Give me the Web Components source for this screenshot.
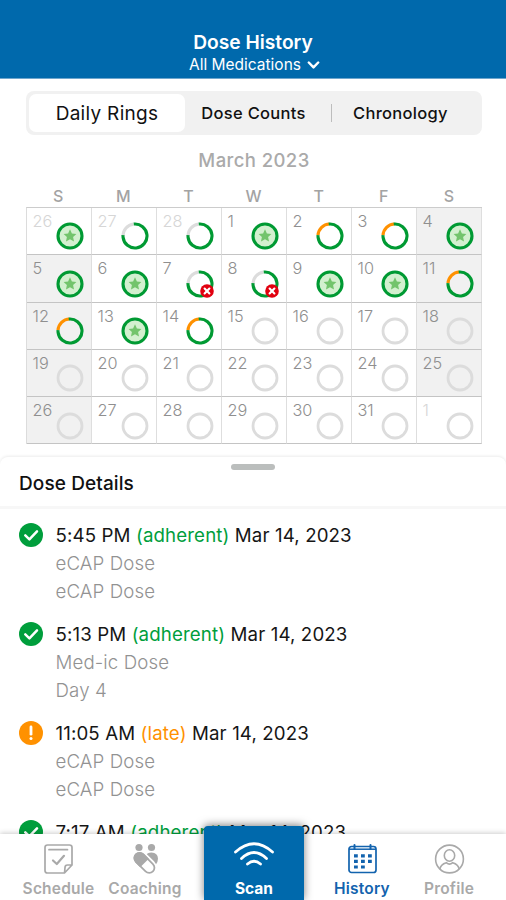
<!DOCTYPE html>
<html lang="en">
<head>
<meta charset="utf-8">
<title>Dose History</title>
<style>
    :root {
        --app-blue: #0069ac;
        --app-green: #009e3c;
        --app-orange: #ff9100;
        --app-muted: #a9a9a9;
    }

    body {
        margin: 0;
        background: #fff;
        font-family: Inter, "Liberation Sans", sans-serif;
    }
</style>
</head>
<body>
<dose-app></dose-app>

<script>
class AppHeader extends HTMLElement {
    constructor() {
        super();
        this.attachShadow({ mode: 'open' });
        this.shadowRoot.innerHTML = `
            <style>
                :host {
                    display: flex;
                    flex-direction: column;
                    align-items: center;
                    box-sizing: border-box;
                    height: 79px;
                    padding-top: 31px;
                    background: var(--app-blue);
                    border-bottom: 1px solid #6fa6cd;
                    color: #fff;
                }

                .title {
                    font-size: 19.2px;
                    line-height: 23px;
                    font-weight: 600;
                }

                .filter {
                    display: flex;
                    align-items: center;
                    gap: 6px;
                    font-size: 15.5px;
                    line-height: 22px;
                    padding-left: 3px;
                }
            </style>
            <div class="title"><slot name="title"></slot></div>
            <div class="filter">
                <slot name="filter"></slot>
                <svg width="13" height="8" viewBox="0 0 13 8" fill="none" stroke="#fff" stroke-width="2.4" stroke-linecap="round" stroke-linejoin="round"><path d="M1.8 1.5 6.5 6.4 11.2 1.5"/></svg>
            </div>
        `;
    }
}

customElements.define('app-header', AppHeader);

class SegmentBar extends HTMLElement {
    constructor() {
        super();
        this.attachShadow({ mode: 'open' });
        this.shadowRoot.innerHTML = `
            <style>
                :host {
                    display: grid;
                    grid-template-columns: 156px 146px 1px 1fr;
                    align-items: center;
                    box-sizing: border-box;
                    height: 44px;
                    margin: 12px 24px 0 26px;
                    padding: 3px;
                    border-radius: 8px;
                    background: #f1f1f1;
                    color: #111;
                    text-align: center;
                    font-size: 16.5px;
                    letter-spacing: 0.3px;
                    font-weight: 500;
                    white-space: nowrap;
                }

                .active {
                    height: 38px;
                    line-height: 39px;
                    border-radius: 7px;
                    background: #fff;
                    font-size: 19px;
                    font-weight: 400;
                }

                .counts { padding-right: 9px; }
                .chrono { padding-right: 10px; }

                .divider {
                    height: 18px;
                    background: #bdbdbd;
                }
            </style>
            <div class="active">Daily Rings</div>
            <div class="counts">Dose Counts</div>
            <div class="divider"></div>
            <div class="chrono">Chronology</div>
        `;
    }
}

customElements.define('segment-bar', SegmentBar);

class DoseRing extends HTMLElement {
    connectedCallback() {
        this.attachShadow({ mode: 'open' });
        const kind = this.getAttribute('kind');
        const arc = (color, from, length) =>
            `<circle cx="14" cy="14" r="12" stroke="${color}" stroke-width="3.1" pathLength="100" stroke-dasharray="${length} ${100 - length}" transform="rotate(${from} 14 14)"/>`;

        let shapes = `<circle cx="14" cy="14" r="12" stroke="#dcdcdc" stroke-width="2.8"/>`;
        if (kind === 'full') {
            shapes = `
                <circle cx="14" cy="14" r="12" fill="#d3f0cf" stroke="#009a33" stroke-width="3.1"/>
                <path fill="#73c46c" d="M14 7.3 15.9 11.4 20.4 11.9 17.1 15 18 19.5 14 17.3 10 19.5 10.9 15 7.6 11.9 12.1 11.4Z"/>`;
        } else if (kind === 'part' || kind === 'missed') {
            shapes = arc('#dcdcdc', -180, 23) + arc('#009a33', -96, 78);
        } else if (kind === 'late') {
            shapes = arc('#ff9100', -176, 23) + arc('#009a33', -96, 78);
        }

        const badge = kind === 'missed' ? `
            <svg class="badge" width="14" height="14" viewBox="0 0 14 14">
                <circle cx="7" cy="7" r="6.8" fill="#e1000f"/>
                <path d="M4.6 4.6 9.4 9.4M9.4 4.6 4.6 9.4" stroke="#fff" stroke-width="2.1" stroke-linecap="round"/>
            </svg>` : "";

        this.shadowRoot.innerHTML = `
            <style>
                :host { display: block; position: relative; width: 28px; height: 28px; }
                svg { display: block; }
                .badge { position: absolute; left: 14px; top: 14px; }
            </style>
            <svg width="28" height="28" viewBox="0 0 28 28" fill="none">${shapes}</svg>
            ${badge}
        `;
    }
}

customElements.define('dose-ring', DoseRing);

class DoseCalendar extends HTMLElement {
    constructor() {
        super();
        this.attachShadow({ mode: 'open' });
        this._days = [
            [26, 'full', 'out'], [27, 'part', 'out'], [28, 'part', 'out'], [1, 'full'], [2, 'late'], [3, 'late'], [4, 'full', 'weekend'],
            [5, 'full', 'weekend'], [6, 'full'], [7, 'missed'], [8, 'missed'], [9, 'full'], [10, 'full'], [11, 'late', 'weekend'],
            [12, 'late', 'weekend'], [13, 'full'], [14, 'late'], [15], [16], [17], [18, '', 'weekend'],
            [19, '', 'weekend'], [20], [21], [22], [23], [24], [25, '', 'weekend'],
            [26, '', 'weekend'], [27], [28], [29], [30], [31], [1, '', 'out']
        ];
        this.render();
    }

    render() {
        const names = ['S', 'M', 'T', 'W', 'T', 'F', 'S'].map(n => `<span>${n}</span>`).join("");
        const cells = this._days.map(([day, kind = '', type = '']) =>
            `<div class="day ${type}"><span>${day}</span><dose-ring kind="${kind}"></dose-ring></div>`).join("");

        this.shadowRoot.innerHTML = `
            <style>
                :host {
                    display: block;
                    margin: 0 24.5px 0 25.5px;
                }

                .month {
                    margin-top: 14px;
                    padding-left: 1px;
                    text-align: center;
                    font-size: 18.5px;
                    line-height: 22px;
                    font-weight: 500;
                    letter-spacing: 0.4px;
                    color: #aaa;
                }

                .names, .grid {
                    display: grid;
                    grid-template-columns: repeat(7, 1fr);
                }

                .names {
                    margin-top: 15px;
                    height: 21px;
                    line-height: 21px;
                    text-align: center;
                    font-size: 16px;
                    font-weight: 500;
                    color: #a3a3a3;
                }

                .grid {
                    grid-template-rows: repeat(5, 47.3px);
                    border-top: 1px solid #ccc;
                    border-left: 1px solid #dcdcdc;
                }

                .day {
                    display: flex;
                    justify-content: space-between;
                    box-sizing: border-box;
                    padding: 5px 6.7px 0 6px;
                    border-right: 1px solid #dedede;
                    border-bottom: 1px solid #c4c4c4;
                    font-size: 16.3px;
                    line-height: 17px;
                    font-weight: 300;
                    color: #8f8f8f;
                }

                .day dose-ring { margin-top: 9.4px; }
                .out span { color: #d6d6d6; }
                .weekend { background: #f1f1f1; }
            </style>
            <div class="month">March 2023</div>
            <div class="names">${names}</div>
            <div class="grid">${cells}</div>
        `;
    }
}

customElements.define('dose-calendar', DoseCalendar);

class DoseEntry extends HTMLElement {
    connectedCallback() {
        this.attachShadow({ mode: 'open' });
        const status = this.getAttribute('status');
        const late = status === 'late';
        const mark = late
            ? `<path d="M12 6v7.2" stroke-width="2.8"/><path d="M12 17.4v.1" stroke-width="3"/>`
            : `<path d="M6.3 12.4 10.4 16.3 18 8.3" stroke-width="2.5"/>`;

        this.shadowRoot.innerHTML = `
            <style>
                :host {
                    display: grid;
                    grid-template-columns: 24px 1fr;
                    column-gap: 12.5px;
                    padding-left: 19px;
                    height: 99px;
                    font-size: 18.7px;
                    line-height: 28px;
                    letter-spacing: 0.12px;
                    color: #161616;
                    white-space: nowrap;
                }

                svg { margin-top: 1px; }
                .status { color: ${late ? 'var(--app-orange)' : 'var(--app-green)'}; }
                .lines { font-weight: 300; color: #929292; }
            </style>
            <svg width="24" height="24" viewBox="0 0 24 24" fill="none" stroke="#fff" stroke-linecap="round" stroke-linejoin="round">
                <circle cx="12" cy="12" r="12" stroke="none" fill="${late ? '#ff9100' : '#009e3c'}"/>${mark}
            </svg>
            <div>
                <div class="when">${this.getAttribute('time')} <span class="status">(${status})</span> ${this.getAttribute('date')}</div>
                <div class="lines"><slot></slot></div>
            </div>
        `;
    }
}

customElements.define('dose-entry', DoseEntry);

class DetailSheet extends HTMLElement {
    constructor() {
        super();
        this.attachShadow({ mode: 'open' });
        this.shadowRoot.innerHTML = `
            <style>
                :host {
                    display: flex;
                    flex-direction: column;
                    flex: 1;
                    min-height: 0;
                    margin-top: 13px;
                    border-radius: 8px 8px 0 0;
                    background: #fff;
                    box-shadow: 0 -1px 3px rgba(0, 0, 0, 0.08);
                    overflow: hidden;
                }

                .head {
                    flex: none;
                    box-sizing: border-box;
                    height: 52px;
                    padding-top: 7px;
                    border-bottom: 3px solid #f7f7f7;
                }

                .handle {
                    width: 44px;
                    height: 6px;
                    margin: 0 auto;
                    border-radius: 3px;
                    background: #bbbebd;
                }

                .heading {
                    padding: 3px 0 0 19px;
                    font-size: 19px;
                    line-height: 22px;
                    letter-spacing: 0.1px;
                    font-weight: 500;
                    color: #111;
                }

                .list {
                    flex: 1;
                    min-height: 0;
                    padding-top: 13px;
                    overflow: hidden;
                }
            </style>
            <div class="head">
                <div class="handle"></div>
                <div class="heading">Dose Details</div>
            </div>
            <div class="list"><slot></slot></div>
        `;
    }
}

customElements.define('detail-sheet', DetailSheet);

const TAB_ICONS = {
    schedule: `<g fill="none" stroke="currentColor" stroke-width="1.7" stroke-linecap="round" stroke-linejoin="round">
        <path d="M29 22V4.5Q29 2 26.5 2H4.5Q2 2 2 4.5V27.5Q2 30 4.5 30H21.5ZM29 22H24.5Q22 22 22 24.5L21.5 30"/>
        <path d="M6 6.7H24.5"/><path d="M10 17.5 13.8 21 21 12.8" stroke-width="2.2"/></g>`,
    coaching: `<g fill="currentColor"><circle cx="9" cy="4.5" r="3.6"/><circle cx="21.5" cy="4.5" r="3.6"/>
        <path d="M16 12.5Q17 9.5 21.5 9.5 27.8 10 28 15.5 28 19.5 25.3 22.5Z"/></g>
        <g transform="rotate(45 15.5 20)"><rect x="3" y="14.3" width="23.2" height="11.6" rx="5.8" fill="#fff" stroke="#fff" stroke-width="3"/></g>
        <g transform="rotate(45 14.5 20)"><path d="M14.5 13.9H7.6A6.1 6.1 0 0 0 7.6 26.1H14.5Z" fill="currentColor"/>
        <rect x="2.4" y="14.8" width="24" height="10.4" rx="5.2" fill="none" stroke="currentColor" stroke-width="1.8"/></g>`,
    history: `<rect x="2" y="3.5" width="27" height="26" rx="2.5" fill="none" stroke="currentColor" stroke-width="1.7"/>
        <path d="M2 6.2H29" stroke="currentColor" stroke-width="1.5"/>
        <path d="M7.5 2V6M23.5 2V6" stroke="currentColor" stroke-width="2" stroke-linecap="round"/>
        <path fill="currentColor" d="M7 11.2h3.8v3.2H7zM14 11.2h3.8v3.2h-3.8zM21 11.2h3.8v3.2h-3.8zM7 16.8h3.8v3.2H7zM14 16.8h3.8v3.2h-3.8zM21 16.8h3.8v3.2h-3.8zM7 22.4h3.8v3.2H7zM14 22.4h3.8v3.2h-3.8z"/>`,
    profile: `<g fill="none" stroke="currentColor" stroke-width="1.6"><circle cx="15.5" cy="16" r="13.9"/>
        <ellipse cx="15.5" cy="12.5" rx="5.2" ry="5.7"/>
        <path d="M6 26C6.5 21.5 9.5 20.5 12.3 19.7Q15.5 22.5 18.7 19.7C21.5 20.5 24.5 21.5 25 26"/></g>`
};

class TabItem extends HTMLElement {
    connectedCallback() {
        this.attachShadow({ mode: 'open' });
        this.shadowRoot.innerHTML = `
            <style>
                :host {
                    display: flex;
                    flex-direction: column;
                    align-items: center;
                    box-sizing: border-box;
                    padding-top: 9px;
                    color: var(--app-muted);
                    font-size: 15.5px;
                    line-height: 20px;
                    letter-spacing: 0.2px;
                    font-weight: 600;
                }

                :host([active]) { color: #1263ae; }
                svg { display: block; margin-bottom: 4px; }
            </style>
            <svg width="31" height="32" viewBox="0 0 31 32">${TAB_ICONS[this.getAttribute('icon')]}</svg>
            <slot></slot>
        `;
    }
}

customElements.define('tab-item', TabItem);

class TabBar extends HTMLElement {
    constructor() {
        super();
        this.attachShadow({ mode: 'open' });
        this.shadowRoot.innerHTML = `
            <style>
                :host {
                    display: grid;
                    grid-template-columns: 15px 87px 86px 16px 100px 15px 86px 88px 1fr;
                    flex: none;
                    height: 66px;
                    background: #fff;
                    box-shadow: 0 -1px 5px rgba(0, 0, 0, 0.2);
                    z-index: 1;
                }

                .scan {
                    grid-column: 5;
                    display: flex;
                    flex-direction: column;
                    align-items: center;
                    box-sizing: border-box;
                    height: 74px;
                    margin-top: -8px;
                    padding-top: 15px;
                    border-radius: 4px 4px 0 0;
                    background: var(--app-blue);
                    box-shadow: 0 -1px 9px rgba(0, 0, 0, 0.5);
                    color: #fff;
                    font-size: 15.5px;
                    line-height: 20px;
                    font-weight: 700;
                }

                .scan svg { display: block; margin-bottom: 4px; }
                .left { grid-column: 2; }
                .mid { grid-column: 3; }
                .right { grid-column: 7; }
            </style>
            <tab-item class="left" icon="schedule">Schedule</tab-item>
            <tab-item class="mid" icon="coaching">Coaching</tab-item>
            <div class="scan">
                <svg width="42" height="34" viewBox="0 0 42 34" fill="none" stroke="#fff" stroke-width="2.8" stroke-linecap="round">
                    <path d="M2.5 11Q21-5.500 39.5 11M8.5 17.500Q21 5.5 33.5 17.500M14.5 23Q21 17.5 27.5 23"/>
                </svg>
                Scan
            </div>
            <tab-item class="right" icon="history" active>History</tab-item>
            <tab-item icon="profile">Profile</tab-item>
        `;
    }
}

customElements.define('tab-bar', TabBar);

class DoseApp extends HTMLElement {
    constructor() {
        super();
        this.attachShadow({ mode: 'open' });
        this.shadowRoot.innerHTML = `
            <style>
                :host {
                    display: flex;
                    flex-direction: column;
                    width: 506px;
                    height: 900px;
                    overflow: hidden;
                }
            </style>
            <app-header>
                <span slot="title">Dose History</span>
                <span slot="filter">All Medications</span>
            </app-header>
            <segment-bar></segment-bar>
            <dose-calendar></dose-calendar>
            <detail-sheet>
                <dose-entry time="5:45 PM" status="adherent" date="Mar 14, 2023">eCAP Dose<br>eCAP Dose</dose-entry>
                <dose-entry time="5:13 PM" status="adherent" date="Mar 14, 2023">Med-ic Dose<br>Day 4</dose-entry>
                <dose-entry time="11:05 AM" status="late" date="Mar 14, 2023">eCAP Dose<br>eCAP Dose</dose-entry>
                <dose-entry time="7:17 AM" status="adherent" date="Mar 14, 2023"></dose-entry>
            </detail-sheet>
            <tab-bar></tab-bar>
        `;
    }
}

customElements.define('dose-app', DoseApp);
</script>
</body>
</html>
